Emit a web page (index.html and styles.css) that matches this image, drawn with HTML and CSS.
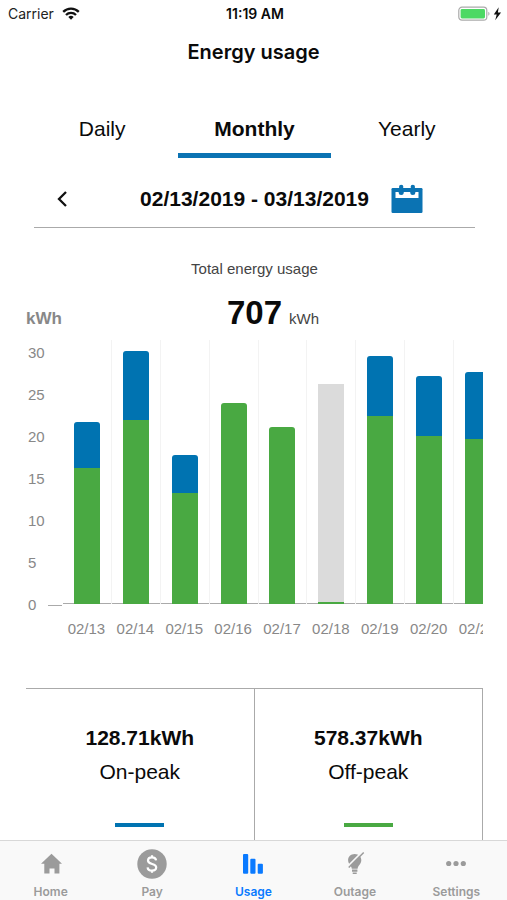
FILE: index.html
```html
<!DOCTYPE html>
<html lang="en">
<head>
<meta charset="utf-8">
<meta name="viewport" content="width=device-width, initial-scale=1">
<title>Energy usage</title>
<link rel="stylesheet" href="styles.css">
</head>
<body>
<div class="status">
  <div class="status-left">
    <span>Carrier</span>
    <svg width="18" height="13" viewBox="0 0 18 13" fill="none" stroke="#111" stroke-width="2.3"><path d="M1.2 4.9a11 11 0 0 1 15.6 0"/><path d="M4 8a7 7 0 0 1 10 0"/><path d="M9 12.8 6.3 10a3.8 3.8 0 0 1 5.4 0z" fill="#111" stroke="none"/></svg>
  </div>
  <time class="status-time">11:19 AM</time>
  <div class="status-right">
    <svg width="44" height="16" viewBox="0 0 44 16"><rect x=".8" y="1.2" width="28" height="13" rx="3.2" fill="#fff" stroke="#aaa" stroke-width="1.2"/><rect x="2.6" y="3" width="24.4" height="9.4" rx="1.4" fill="#4cd964"/><path d="M30.3 5.8c1.6.6 1.6 3.400 0 4z" fill="#aaa"/><path d="M40.700 1.300 35.800 8.600h2.900L37.200 14.200l5.900-7.600h-3.200z" fill="#111"/></svg>
  </div>
</div>

<header class="title"><h1>Energy usage</h1></header>

<main class="content">
  <nav class="periods">
    <button type="button" class="period">Daily</button>
    <button type="button" class="period period-active">Monthly</button>
    <button type="button" class="period">Yearly</button>
  </nav>

  <div class="range">
    <button type="button" class="prev" aria-label="Previous period">
      <svg width="12" height="18" viewBox="0 0 12 18" fill="none" stroke="#111" stroke-width="2.300"><path d="M10 2 3 9l7 7"/></svg>
    </button>
    <strong class="range-text">02/13/2019 - 03/13/2019</strong>
    <button type="button" class="calendar" aria-label="Choose dates">
      <svg width="32" height="30" viewBox="0 0 32 30"><path d="M1.700 4h28.600q1.200 0 1.200 1.200v22.600q0 1.200-1.200 1.200H1.700Q.5 29 .5 27.800V5.200Q.5 4 1.700 4z" fill="#0b73b3"/><path d="M4.500 8h3.300q2.400 3.800 4.800 0h6.800q2.400 3.800 4.800 0h3.300v6h-23z" fill="#fff"/><g fill="#0b73b3"><circle cx="10.200" cy="3" r="2.200"/><circle cx="21.800" cy="3" r="2.200"/><circle cx="10.200" cy="8.500" r="2.500"/><circle cx="21.800" cy="8.500" r="2.500"/><path d="M8.700 3h3v6h-3zM20.300 3h3v6h-3z"/></g></svg>
    </button>
  </div>

  <section class="usage">
    <h2 class="usage-label">Total energy usage</h2>
    <div class="usage-head">
      <span class="axis-unit">kWh</span>
      <strong class="total">707</strong>
      <span class="total-unit">kWh</span>
    </div>
    <div class="chart">
      <div class="y-axis">
        <span>30</span><span>25</span><span>20</span><span>15</span><span>10</span><span>5</span><span class="zero">0</span>
      </div>
      <div class="scroller">
        <div class="days">
          <div class="day"><div class="plot"><div class="bar"><i class="on" style="height:46px"></i><i class="off" style="height:136px"></i></div></div><span class="date">02/13</span></div>
          <div class="day"><div class="plot"><div class="bar"><i class="on" style="height:69px"></i><i class="off" style="height:184px"></i></div></div><span class="date">02/14</span></div>
          <div class="day"><div class="plot"><div class="bar"><i class="on" style="height:38px"></i><i class="off" style="height:111px"></i></div></div><span class="date">02/15</span></div>
          <div class="day"><div class="plot"><div class="bar"><i class="off" style="height:201px"></i></div></div><span class="date">02/16</span></div>
          <div class="day"><div class="plot"><div class="bar"><i class="off" style="height:177px"></i></div></div><span class="date">02/17</span></div>
          <div class="day"><div class="plot"><div class="bar bar-square"><i class="estimate" style="height:218px"></i><i class="off" style="height:2px"></i></div></div><span class="date">02/18</span></div>
          <div class="day"><div class="plot"><div class="bar"><i class="on" style="height:60px"></i><i class="off" style="height:188px"></i></div></div><span class="date">02/19</span></div>
          <div class="day"><div class="plot"><div class="bar"><i class="on" style="height:60px"></i><i class="off" style="height:168px"></i></div></div><span class="date">02/20</span></div>
          <div class="day"><div class="plot"><div class="bar"><i class="on" style="height:67px"></i><i class="off" style="height:165px"></i></div></div><span class="date">02/21</span></div>
        </div>
      </div>
    </div>
  </section>

  <section class="summary">
    <div class="card"><strong>128.71kWh</strong><span>On-peak</span><i class="key on"></i></div>
    <div class="card"><strong>578.37kWh</strong><span>Off-peak</span><i class="key off"></i></div>
  </section>
</main>

<nav class="tabbar">
  <a href="#home" class="tab"><svg width="30" height="30" viewBox="0 0 30 30"><path d="M15.500 4.700 26 14.700h-2.600v9.800h-4.900v-5h-5v5H8.300v-9.800H5z" fill="#9b9b9b"/></svg><span>Home</span></a>
  <a href="#pay" class="tab"><svg width="30" height="30" viewBox="0 0 30 30"><circle cx="15" cy="15" r="14.700" fill="#9b9b9b"/><path d="M19.100 11.300c-.3-1.900-1.900-2.900-4.100-2.900s-4 1.100-4 3.200c0 4.500 8.200 2.300 8.200 6.700 0 2.100-1.800 3.300-4.200 3.300s-4.200-1.200-4.400-3.300M15 6.300v3M15 20.500v3.200" fill="none" stroke="#fff" stroke-width="2.200"/></svg><span>Pay</span></a>
  <a href="#usage" class="tab tab-active"><svg width="30" height="30" viewBox="0 0 30 30" fill="#0a7aff"><rect x="5" y="5" width="5.200" height="19.800" rx="1"/><rect x="12.300" y="9.800" width="5.200" height="15" rx="1"/><rect x="19.700" y="14.700" width="5.200" height="10.100" rx="1"/></svg><span>Usage</span></a>
  <a href="#outage" class="tab"><svg width="30" height="30" viewBox="0 0 30 30"><path d="M14.700 5c4 0 6.600 2.800 6.600 6.300 0 3.700-3.300 5.200-3.700 8.500h-5.800c-.3-3.300-3.700-4.800-3.700-8.500C8.100 7.800 10.700 5 14.700 5zM12 20.600h5.400v2.200H12zM12.700 23.400h4v1.600h-4z" fill="#9b9b9b"/><path d="M22.300 2.900 7.500 17.700" stroke="#f9f9f9" stroke-width="1.800"/><path d="M23.700 3.500 8.700 18.500" stroke="#9b9b9b" stroke-width="1.500"/></svg><span>Outage</span></a>
  <a href="#settings" class="tab"><svg width="30" height="30" viewBox="0 0 30 30" fill="#9b9b9b"><circle cx="7.700" cy="14.500" r="2.600"/><circle cx="15" cy="14.500" r="2.600"/><circle cx="22.300" cy="14.500" r="2.600"/></svg><span>Settings</span></a>
</nav>
</body>
</html>
```
FILE: styles.css
```css
* { box-sizing: border-box; }

body {
  margin: 0;
  min-height: 100vh;
  display: flex;
  flex-direction: column;
  background: #fff;
  color: #0a0a0a;
  font-family: "Liberation Sans", Arial, sans-serif;
}

button {
  border: 0;
  padding: 0;
  background: none;
  color: inherit;
  font: inherit;
}

svg { display: block; }

.status {
  display: grid;
  grid-template-columns: 1fr auto 1fr;
  align-items: center;
  height: 27px;
  padding: 0 5px 0 8px;
  font: 400 14px/20px Inter, sans-serif;
}

.status-left { display: flex; align-items: center; gap: 8px; color: #222; }
.status-time { font-weight: 600; }
.status-right { justify-self: end; }

.title {
  height: 50px;
  text-align: center;
}

.title h1 {
  margin: 0;
  font: 600 20px/50px Inter, sans-serif;
}

.content {
  flex: 1;
  display: flex;
  flex-direction: column;
  padding: 23px 24px 0 26px;
}

.periods {
  display: grid;
  grid-template-columns: repeat(3, 1fr);
}

.period {
  height: 58px;
  padding-top: 4px;
  border-bottom: 5px solid transparent;
  font-size: 21px;
  line-height: 49px;
}

.period-active {
  border-color: #0b73b3;
  font-weight: 700;
}

.range {
  display: grid;
  grid-template-columns: 1fr auto 1fr;
  align-items: center;
  height: 70px;
  margin: 0 8px;
  padding-top: 13px;
  border-bottom: 1px solid #aaa;
}

.prev { width: 56px; display: flex; justify-content: center; }
.range-text { font-size: 21px; line-height: 24px; }
.calendar { justify-self: start; margin-left: 22px; }

.usage-label {
  margin: 31px 0 0;
  color: #444;
  font-size: 15px;
  font-weight: 400;
  line-height: 20px;
  text-align: center;
}

.usage-head {
  display: grid;
  grid-template-columns: 1fr auto 1fr;
  align-items: baseline;
  column-gap: 7px;
  height: 53px;
  padding-top: 15px;
  line-height: 38px;
}

.axis-unit { color: #888; font-size: 17px; font-weight: 700; }
.total { font-size: 33px; }
.total-unit { color: #444; font-size: 15px; }

.chart { display: flex; }

.y-axis {
  width: 36px;
  display: flex;
  flex-direction: column;
  color: #888;
  font-size: 15px;
  line-height: 42px;
}

.y-axis span { padding-left: 2px; }

.zero {
  display: flex;
  align-items: center;
  justify-content: space-between;
}

.zero::after {
  content: "";
  width: 14px;
  height: 1px;
  background: #aaa;
}

.scroller {
  flex: 1;
  min-width: 0;
  margin-top: 8px;
  overflow: hidden;
}

.days {
  display: grid;
  grid-template-columns: repeat(9, 1fr);
  width: calc(100% + 19px);
}

.plot {
  display: flex;
  align-items: flex-end;
  justify-content: center;
  height: 264px;
  border-left: 1px solid #f3f3f3;
  box-shadow: inset 0 -1px #aaa;
}

.day:first-child .plot { border-color: transparent; }

.bar {
  width: 26px;
  overflow: hidden;
  border-radius: 3px 3px 0 0;
}

.bar-square { border-radius: 0; }
.bar i { display: block; }

.on { background: #0073b1; }
.off { background: #49a942; }
.estimate { background: #dbdbdb; }

.date {
  display: block;
  padding-top: 15px;
  color: #888;
  font-size: 15px;
  line-height: 20px;
  text-align: center;
}

.summary {
  flex: 1;
  display: grid;
  grid-template-columns: 1fr 1fr;
  margin-top: 49px;
  border-top: 1px solid #aaa;
}

.card {
  display: flex;
  flex-direction: column;
  align-items: center;
  padding-top: 32px;
  border-right: 1px solid #aaa;
  font-size: 21px;
  line-height: 34px;
}

.key {
  width: 49px;
  height: 4px;
  margin-top: 34px;
}

.tabbar {
  display: grid;
  grid-template-columns: repeat(5, 1fr);
  height: 60px;
  border-top: 1px solid #d8d8d8;
  background: #f9f9f9;
}

.tab {
  display: flex;
  flex-direction: column;
  align-items: center;
  gap: 5px;
  padding-top: 8px;
  color: #9b9b9b;
  font: 600 12px/16px Inter, sans-serif;
  text-decoration: none;
}

.tab-active { color: #0a7aff; }
```
